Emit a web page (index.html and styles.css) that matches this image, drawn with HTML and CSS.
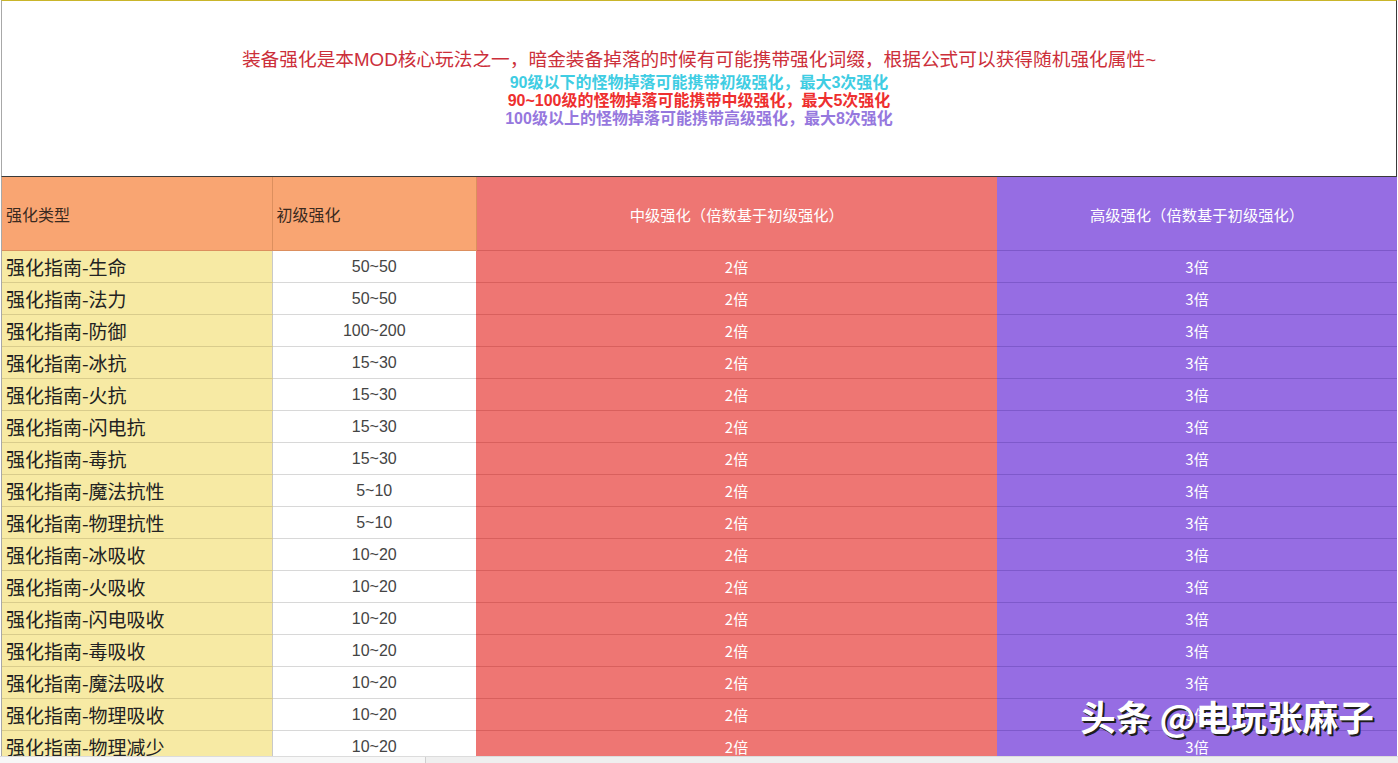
FILE: index.html
```html
<!DOCTYPE html>
<html lang="zh">
<head>
<meta charset="utf-8">
<title>装备强化</title>
<link rel="stylesheet" href="styles.css">
</head>
<body>
<div class="page">
  <div class="intro">
    <p class="lead">装备强化是本MOD核心玩法之一，暗金装备掉落的时候有可能携带强化词缀，根据公式可以获得随机强化属性~</p>
    <p class="tier t1">90级以下的怪物掉落可能携带初级强化，最大3次强化</p>
    <p class="tier t2">90~100级的怪物掉落可能携带中级强化，最大5次强化</p>
    <p class="tier t3">100级以上的怪物掉落可能携带高级强化，最大8次强化</p>
  </div>
  <div class="sheet">
    <table class="grid">
      <colgroup>
        <col class="c1"><col class="c2"><col class="c3"><col class="c4">
      </colgroup>
      <thead>
        <tr>
          <th class="h-type">强化类型</th>
          <th class="h-base">初级强化</th>
          <th class="h-mid">中级强化（倍数基于初级强化）</th>
          <th class="h-high">高级强化（倍数基于初级强化）</th>
        </tr>
      </thead>
      <tbody>
        <tr><td class="name">强化指南-生命</td><td class="base">50~50</td><td class="mid">2倍</td><td class="high">3倍</td></tr>
        <tr><td class="name">强化指南-法力</td><td class="base">50~50</td><td class="mid">2倍</td><td class="high">3倍</td></tr>
        <tr><td class="name">强化指南-防御</td><td class="base">100~200</td><td class="mid">2倍</td><td class="high">3倍</td></tr>
        <tr><td class="name">强化指南-冰抗</td><td class="base">15~30</td><td class="mid">2倍</td><td class="high">3倍</td></tr>
        <tr><td class="name">强化指南-火抗</td><td class="base">15~30</td><td class="mid">2倍</td><td class="high">3倍</td></tr>
        <tr><td class="name">强化指南-闪电抗</td><td class="base">15~30</td><td class="mid">2倍</td><td class="high">3倍</td></tr>
        <tr><td class="name">强化指南-毒抗</td><td class="base">15~30</td><td class="mid">2倍</td><td class="high">3倍</td></tr>
        <tr><td class="name">强化指南-魔法抗性</td><td class="base">5~10</td><td class="mid">2倍</td><td class="high">3倍</td></tr>
        <tr><td class="name">强化指南-物理抗性</td><td class="base">5~10</td><td class="mid">2倍</td><td class="high">3倍</td></tr>
        <tr><td class="name">强化指南-冰吸收</td><td class="base">10~20</td><td class="mid">2倍</td><td class="high">3倍</td></tr>
        <tr><td class="name">强化指南-火吸收</td><td class="base">10~20</td><td class="mid">2倍</td><td class="high">3倍</td></tr>
        <tr><td class="name">强化指南-闪电吸收</td><td class="base">10~20</td><td class="mid">2倍</td><td class="high">3倍</td></tr>
        <tr><td class="name">强化指南-毒吸收</td><td class="base">10~20</td><td class="mid">2倍</td><td class="high">3倍</td></tr>
        <tr><td class="name">强化指南-魔法吸收</td><td class="base">10~20</td><td class="mid">2倍</td><td class="high">3倍</td></tr>
        <tr><td class="name">强化指南-物理吸收</td><td class="base">10~20</td><td class="mid">2倍</td><td class="high">3倍</td></tr>
        <tr><td class="name">强化指南-物理减少</td><td class="base">10~20</td><td class="mid">2倍</td><td class="high">3倍</td></tr>
      </tbody>
    </table>
    <div class="watermark">头条 @电玩张麻子</div>
  </div>
  <div class="scrollbar">
    <div class="tab"></div>
    <div class="track"></div>
  </div>
</div>
</body>
</html>
```

FILE: styles.css
```css
html, body {
  margin: 0;
  padding: 0;
  background: #ffffff;
}
body {
  font-family: "Noto Sans CJK SC", "Noto Sans", sans-serif;
}
.page {
  width: 1398px;
  height: 763px;
  display: flex;
  flex-direction: column;
  overflow: hidden;
}
.intro {
  height: 175px;
  margin-left: 1px;
  margin-right: 1px;
  border-top: 1px solid #c9b52a;
  border-bottom: 1px solid #3a3a3a;
  border-left: 1px solid #a8a8a8;
  border-right: 1px solid #3a3a3a;
  display: flex;
  flex-direction: column;
  align-items: center;
  justify-content: center;
  box-sizing: content-box;
}
.intro p {
  margin: 0;
  white-space: nowrap;
}
.lead {
  font-family: "Liberation Sans", "Noto Sans CJK SC", sans-serif;
  font-size: 18.7px;
  line-height: 22px;
  color: #cc2f3a;
  margin-bottom: 3px !important;
}
.tier {
  font-family: "Liberation Sans", "Noto Sans CJK SC", sans-serif;
  font-size: 16px;
  font-weight: bold;
  line-height: 18px;
}
.t1 { color: #3fcde3; }
.t2 { color: #ee2f2f; }
.t3 { color: #9678de; }

.sheet {
  flex: 1;
  position: relative;
  overflow: hidden;
  margin-left: 1px;
  border-left: 1px solid #a8a8a8;
}
.grid {
  border-collapse: collapse;
  table-layout: fixed;
  width: 1395px;
}
.c1 { width: 270px; }
.c2 { width: 204px; }
.c3 { width: 521px; }
.c4 { width: 400px; }

.grid th {
  height: 73px;
  padding: 0 4px;
  font-weight: normal;
  font-size: 15.3px;
  white-space: nowrap;
}
.h-type, .h-base {
  background: #f9a572;
  color: #3a2a20;
  text-align: left;
  font-size: 16px !important;
  border-right: 1px solid #dc8f5e;
  border-bottom: 1px solid #dc8f5e;
}
.h-mid {
  background: #ee7673;
  color: #ffffff;
  text-align: center;
  border-bottom: 1px solid #d65f5c;
}
.h-high {
  background: #966de3;
  color: #ffffff;
  text-align: center;
  border-bottom: 1px solid #7d58c9;
}

.grid td {
  height: 31px;
  padding: 0 4px;
  white-space: nowrap;
}
.name {
  background: #f7eaa4;
  color: #222222;
  font-size: 19px;
  border-bottom: 1px solid #d9cc8c;
  border-right: 1px solid #c9c9c9;
}
.base {
  background: #ffffff;
  color: #444444;
  text-align: center;
  font-family: "Liberation Sans", sans-serif;
  font-size: 16px;
  border-bottom: 1px solid #d8d8d8;
}
.mid {
  background: #ee7673;
  color: #ffffff;
  text-align: center;
  font-size: 15px;
  border-bottom: 1px solid #d8605d;
}
.high {
  background: #966de3;
  color: #ffffff;
  text-align: center;
  font-size: 15px;
  border-bottom: 1px solid #7e59cb;
}

.watermark {
  position: absolute;
  left: 1078px;
  top: 515px;
  font-family: "Noto Sans CJK SC", sans-serif;
  font-size: 35.7px;
  font-weight: bold;
  line-height: 48px;
  color: #ffffff;
  text-shadow: 2px 2px 0 #1e1e1e, 1px 1px 0 #3a3a3a;
  white-space: nowrap;
}

.scrollbar {
  height: 6px;
  flex: none;
  display: flex;
  background: #efefef;
  border-top: 1px solid #dcdcdc;
}
.tab {
  width: 425px;
  background: #f7f7f7;
  border-right: 1px solid #cfcfcf;
}
.track {
  flex: 1;
}
```
